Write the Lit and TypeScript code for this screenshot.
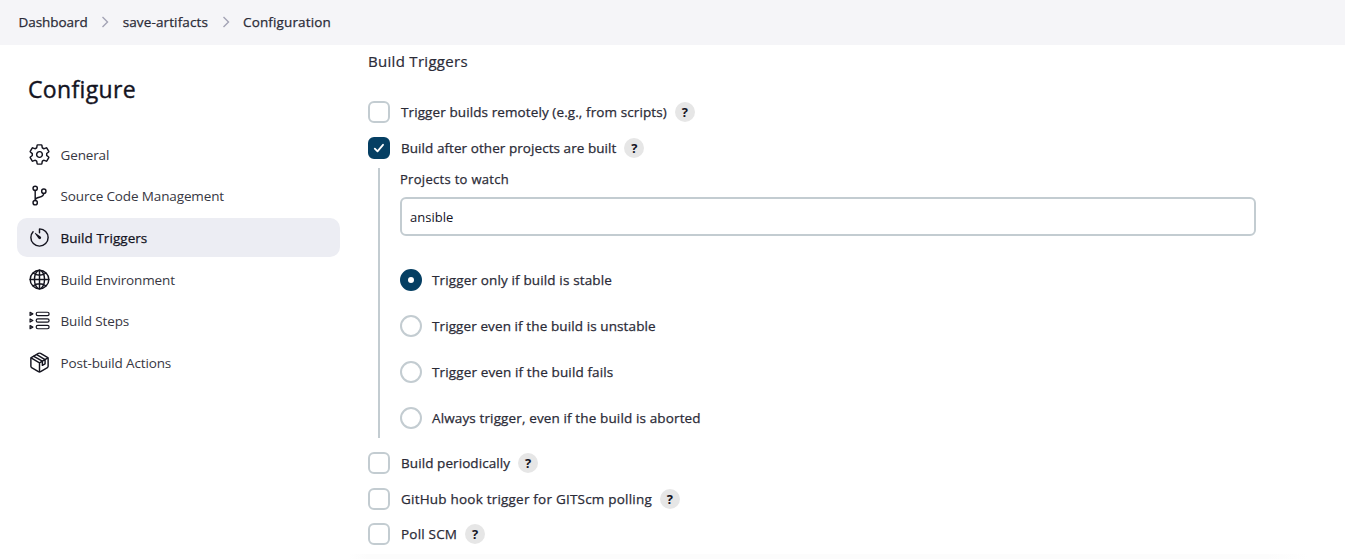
import { LitElement, html, svg, css } from "lit";
import { customElement, property } from "lit/decorators.js";

const icons: Record<string, unknown> = {
  gear: svg`<path d="M262.29 192.31a64 64 0 1057.4 57.4 64.13 64.13 0 00-57.4-57.4zM416.39 256a154.34 154.34 0 01-1.53 20.79l45.21 35.46a10.81 10.81 0 012.45 13.75l-42.77 74a10.81 10.81 0 01-13.14 4.59l-44.9-18.08a16.11 16.11 0 00-15.17 1.75A164.48 164.48 0 01325 400.8a15.94 15.94 0 00-8.82 12.14l-6.73 47.89a11.08 11.08 0 01-10.68 9.17h-85.54a11.11 11.11 0 01-10.69-8.87l-6.72-47.82a16.07 16.07 0 00-9-12.22 155.3 155.3 0 01-21.46-12.57 16 16 0 00-15.11-1.71l-44.89 18.07a10.81 10.81 0 01-13.14-4.58l-42.77-74a10.8 10.8 0 012.45-13.75l38.21-30a16.05 16.05 0 006-14.08c-.36-4.17-.58-8.33-.58-12.5s.21-8.27.58-12.35a16 16 0 00-6.07-13.94l-38.19-30A10.81 10.81 0 0149.48 186l42.77-74a10.81 10.81 0 0113.14-4.59l44.9 18.08a16.11 16.11 0 0015.17-1.75A164.48 164.48 0 01187 111.2a15.94 15.94 0 008.82-12.14l6.73-47.89A11.08 11.08 0 01213.23 42h85.54a11.11 11.11 0 0110.69 8.87l6.72 47.82a16.07 16.07 0 009 12.22 155.3 155.3 0 0121.46 12.57 16 16 0 0015.11 1.71l44.89-18.07a10.81 10.81 0 0113.14 4.58l42.77 74a10.8 10.8 0 01-2.45 13.75l-38.21 30a16.05 16.05 0 00-6.05 14.08c.33 4.14.55 8.3.55 12.47z"/>`,
  branch: svg`<circle cx="160" cy="96" r="48"/><circle cx="160" cy="416" r="48"/><circle cx="352" cy="160" r="48"/><path d="M160 368V144M352 208c0 128-192 48-192 160"/>`,
  timer: svg`<path d="M112.91 128A191.85 191.85 0 0064 254c-1.18 106.35 85.65 193.8 192 194 106.2.2 192-85.83 192-192 0-104.54-83.55-189.61-187.5-192a4.36 4.36 0 00-4.5 4.37V152"/><path class="solid" d="M233.38 278.63l-79-113a8.13 8.13 0 0111.32-11.32l113 79a32.5 32.5 0 01-37.25 53.26 33.21 33.21 0 01-8.07-7.94z"/>`,
  globe: svg`<path d="M256 48C141.13 48 48 141.13 48 256s93.13 208 208 208 208-93.13 208-208S370.87 48 256 48z"/><path d="M256 48c-58.07 0-112.67 93.13-112.67 208S197.93 464 256 464s112.67-93.13 112.67-208S314.07 48 256 48z"/><path d="M117.33 117.33c38.24 27.15 86.38 43.34 138.67 43.34s100.43-16.19 138.67-43.34M394.67 394.67c-38.24-27.15-86.38-43.34-138.67-43.34s-100.43 16.19-138.67 43.34M256 48v416M464 256H48"/>`,
  steps: svg`<g class="thin"><rect x="182" y="72" width="288" height="74" rx="37"/><rect x="182" y="219" width="288" height="74" rx="37"/><rect x="182" y="366" width="288" height="74" rx="37"/><path d="M46 75v68l62-34zM46 222v68l62-34zM46 369v68l62-34z"/></g>`,
  box: svg`<path d="M448 341.37V170.61A32 32 0 00432.11 143l-152-88.46a47.94 47.94 0 00-48.24 0L79.89 143A32 32 0 0064 170.61v170.76A32 32 0 0079.89 369l152 88.46a48 48 0 0048.24 0l152-88.46A32 32 0 00448 341.37z"/><path d="M69 153.99l187 110 187-110M256 463.99v-200M130 117l190 111v92l60-35v-92L194 81"/>`,
};

@customElement("side-link")
class SideLink extends LitElement {
  @property() label = "";
  @property() icon = "";
  @property({ type: Boolean, reflect: true }) active = false;
  static styles = css`
    :host { display: flex; align-items: center; height: 39px; padding-left: 10.5px; gap: 10px; border-radius: 10px; color: #373742; letter-spacing: -0.13px; }
    :host([active]) { background: #ecedf3; color: #14141f; letter-spacing: 0.05px; -webkit-text-stroke: 0.25px; }
    svg { width: 23px; height: 23px; margin-top: -1px; fill: none; stroke: #14141f; stroke-width: 32; stroke-linecap: round; stroke-linejoin: round; }
    :host([active]) svg { margin-top: 0; }
    .solid { fill: #14141f; stroke: none; }
    .thin { stroke-width: 27; }
  `;
  render() {
    return html`<svg viewBox="0 0 512 512">${icons[this.icon]}</svg><span>${this.label}</span>`;
  }
}

@customElement("option-row")
class OptionRow extends LitElement {
  @property() label = "";
  @property() kind = "checkbox";
  @property({ type: Number }) tracking = 0.1;
  @property({ type: Boolean }) checked = false;
  @property({ type: Boolean }) help = false;
  static styles = css`
    :host { display: flex; align-items: center; height: 22px; font-size: 13.5px; color: #2b2b37; }
    .mark { box-sizing: border-box; width: 22px; height: 22px; border: 2px solid #c3ccd1; border-radius: 6px; background: #fff; display: grid; place-items: center; margin-right: 11px; flex: none; }
    .radio { border-radius: 50%; margin-right: 10px; }
    .on { background: #053f63; border-color: #053f63; }
    .dot { width: 6px; height: 6px; border-radius: 50%; background: #fff; }
    .label { -webkit-text-stroke: 0.25px; }
    svg { width: 14px; height: 14px; fill: none; stroke: #fff; stroke-width: 1.8; stroke-linecap: round; stroke-linejoin: round; }
    .help { width: 20px; height: 20px; border-radius: 50%; background: #e6e6e6; color: #14141f; font-weight: 700; font-size: 13px; line-height: 20px; text-align: center; margin-left: 8px; }
  `;
  render() {
    const radio = this.kind === "radio";
    const inner = !this.checked ? "" : radio
      ? html`<span class="dot"></span>`
      : html`<svg viewBox="0 0 14 14"><path d="M2.8 7.6L5.5 10.4L11 3.8"/></svg>`;
    return html`<span class="mark ${radio ? "radio" : ""} ${this.checked ? "on" : ""}">${inner}</span
      ><span class="label" style="letter-spacing:${this.tracking}px">${this.label}</span>${this.help ? html`<span class="help">?</span>` : ""}`;
  }
}

@customElement("app-root")
class AppRoot extends LitElement {
  static styles = css`
    :host { display: block; height: 559px; overflow: hidden; background: #fff; color: #14141f; font: 400 13.5px/20px "Open Sans", "Noto Sans", sans-serif; }
    header { box-sizing: border-box; height: 45px; background: #f5f5f8; display: flex; align-items: center; padding: 0 0 2px 18.5px; color: #2b2b37; -webkit-text-stroke: 0.25px; }
    header svg { width: 8px; height: 12px; margin: 0 13.5px; fill: none; stroke: #a3a3b5; stroke-width: 1.4; }
    .crumb { letter-spacing: 0.13px; }
    .first { letter-spacing: -0.06px; }
    .page { display: grid; grid-template-columns: 323px 888px; grid-template-rows: 514px; column-gap: 28px; padding-left: 17px; }
    h1 { margin: 28px 0 30px 11px; font-size: 23px; line-height: 32px; font-weight: 400; letter-spacing: 0.35px; -webkit-text-stroke: 0.4px; }
    nav { display: grid; row-gap: 2.7px; }
    main { display: flex; flex-direction: column; }
    h2 { margin: 5px 0 29px; font-size: 15px; line-height: 22px; font-weight: 400; letter-spacing: 0.3px; color: #2b2b37; -webkit-text-stroke: 0.2px; }
    .options, .radios { display: grid; }
    .options { row-gap: 14px; }
    .late { row-gap: 13.6px; }
    .nested { margin: 9px 0 14px 10px; border-left: 2px solid #c3ccd1; padding-left: 20px; height: 270px; box-sizing: border-box; }
    .caption { font-size: 13px; line-height: 22px; letter-spacing: 0.3px; color: #2b2b37; -webkit-text-stroke: 0.25px; }
    .field { box-sizing: border-box; height: 39px; width: 856px; border: 2px solid #c3ccd1; border-radius: 6px; margin: 7px 0 33px; padding-left: 8px; line-height: 36px; font-size: 13px; }
    .radios { row-gap: 24px; }
    .foot { flex: none; height: 5px; margin: auto 0 0 -20px; width: 960px; background: linear-gradient(90deg, #fff, #fcfcfc 20px, #fcfcfc 920px, #fff); }
  `;
  render() {
    const sep = html`<svg viewBox="0 0 8 12"><path d="M1.5 1l5 5-5 5"/></svg>`;
    return html`
      <header><span class="first">Dashboard</span>${sep}<span class="crumb">save-artifacts</span>${sep}<span class="crumb">Configuration</span></header>
      <div class="page">
        <aside>
          <h1>Configure</h1>
          <nav>
            <side-link icon="gear" label="General"></side-link>
            <side-link icon="branch" label="Source Code Management"></side-link>
            <side-link icon="timer" label="Build Triggers" active></side-link>
            <side-link icon="globe" label="Build Environment"></side-link>
            <side-link icon="steps" label="Build Steps"></side-link>
            <side-link icon="box" label="Post-build Actions"></side-link>
          </nav>
        </aside>
        <main>
          <h2>Build Triggers</h2>
          <div class="options">
            <option-row label="Trigger builds remotely (e.g., from scripts)" tracking="0.1" help></option-row>
            <option-row label="Build after other projects are built" tracking="0.06" checked help></option-row>
          </div>
          <div class="nested">
            <div class="caption">Projects to watch</div>
            <div class="field">ansible</div>
            <div class="radios">
              <option-row kind="radio" label="Trigger only if build is stable" tracking="0.14" checked></option-row>
              <option-row kind="radio" label="Trigger even if the build is unstable" tracking="0.1"></option-row>
              <option-row kind="radio" label="Trigger even if the build fails" tracking="0.13"></option-row>
              <option-row kind="radio" label="Always trigger, even if the build is aborted" tracking="0.13"></option-row>
            </div>
          </div>
          <div class="options late">
            <option-row label="Build periodically" tracking="0.08" help></option-row>
            <option-row label="GitHub hook trigger for GITScm polling" tracking="0.21" help></option-row>
            <option-row label="Poll SCM" tracking="0.2" help></option-row>
          </div>
          <div class="foot"></div>
        </main>
      </div>`;
  }
}
